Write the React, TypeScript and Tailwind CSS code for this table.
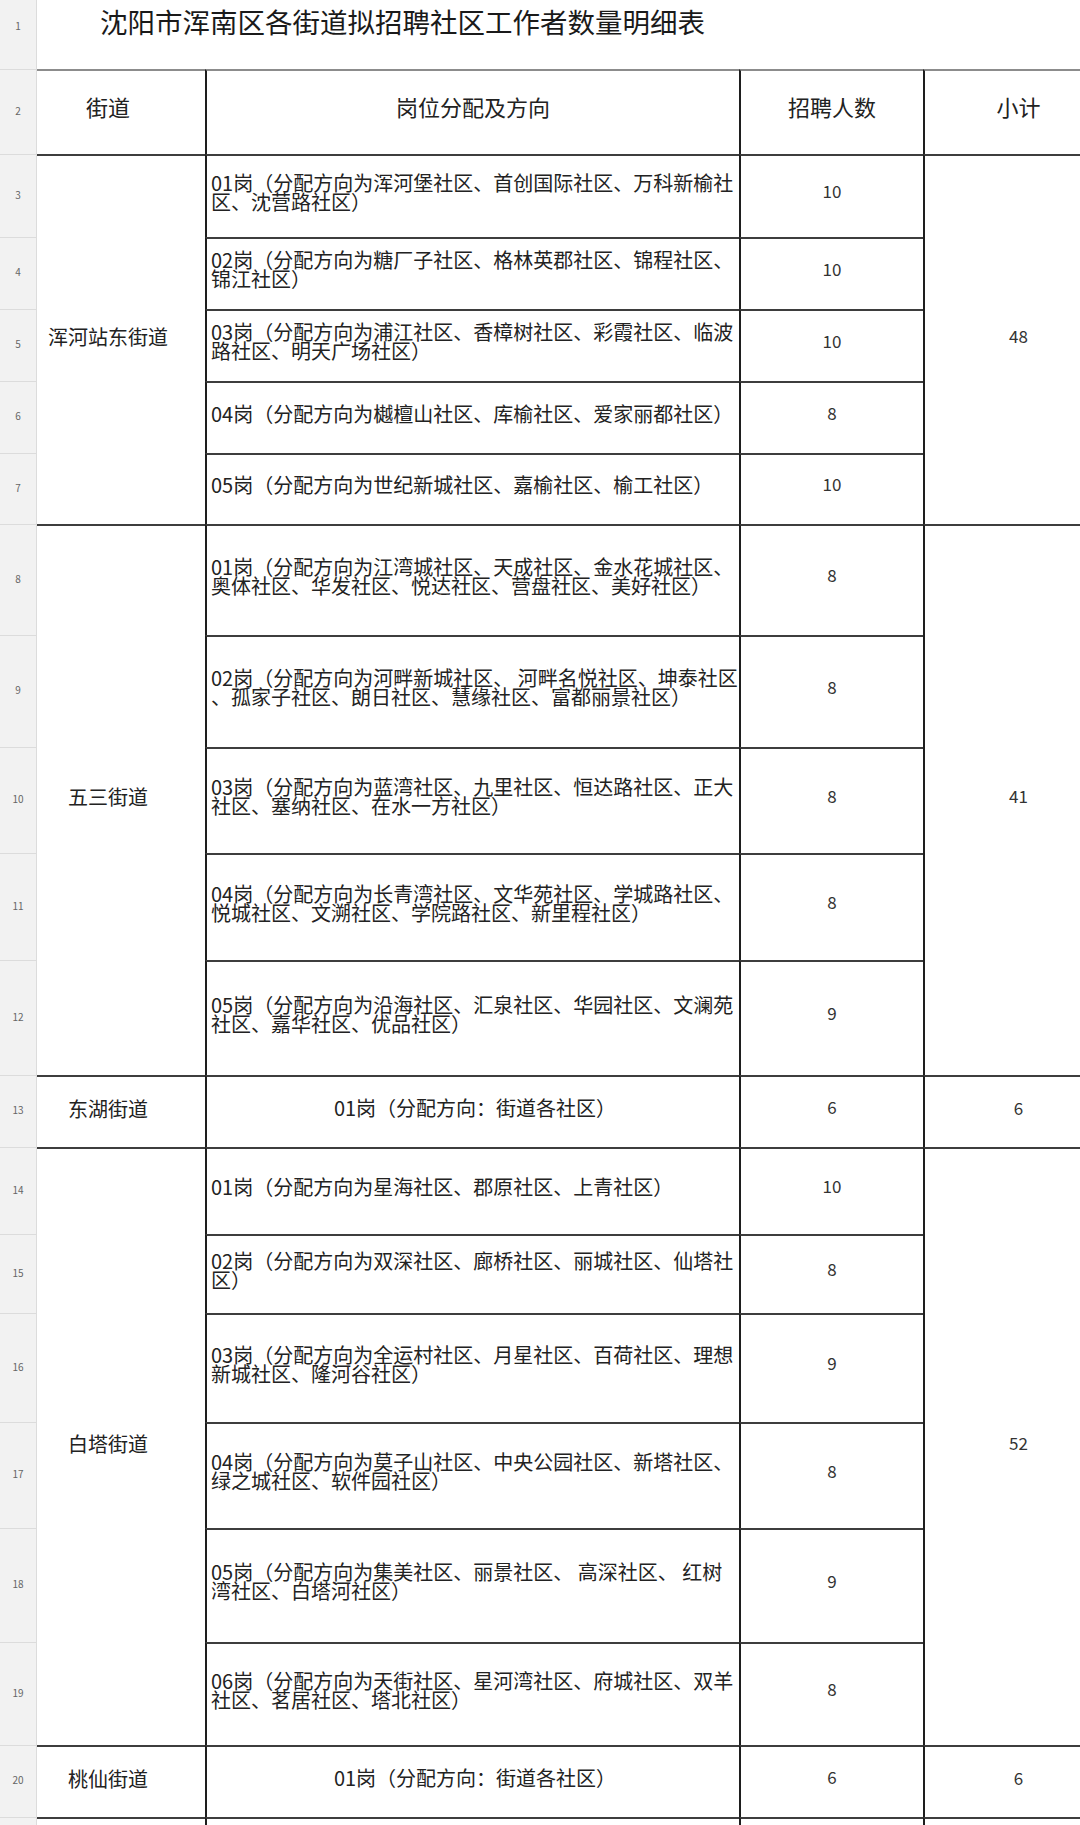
import React from 'react'

type Post = { lines: string[]; count: number }
type Block = { street: string; span: string; subtotal: number; posts: Post[]; center?: boolean }

const blocks: Block[] = [
  {
    street: '浑河站东街道',
    span: 'row-span-5',
    subtotal: 48,
    posts: [
      { lines: ['01岗（分配方向为浑河堡社区、首创国际社区、万科新榆社', '区、沈营路社区）'], count: 10 },
      { lines: ['02岗（分配方向为糖厂子社区、格林英郡社区、锦程社区、', '锦江社区）'], count: 10 },
      { lines: ['03岗（分配方向为浦江社区、香樟树社区、彩霞社区、临波', '路社区、明天广场社区）'], count: 10 },
      { lines: ['04岗（分配方向为樾檀山社区、库榆社区、爱家丽都社区）'], count: 8 },
      { lines: ['05岗（分配方向为世纪新城社区、嘉榆社区、榆工社区）'], count: 10 },
    ],
  },
  {
    street: '五三街道',
    span: 'row-span-5',
    subtotal: 41,
    posts: [
      { lines: ['01岗（分配方向为江湾城社区、天成社区、金水花城社区、', '奥体社区、华发社区、悦达社区、营盘社区、美好社区）'], count: 8 },
      { lines: ['02岗（分配方向为河畔新城社区、 河畔名悦社区、坤泰社区', '、孤家子社区、朗日社区、慧缘社区、富都丽景社区）'], count: 8 },
      { lines: ['03岗（分配方向为蓝湾社区、九里社区、恒达路社区、正大', '社区、塞纳社区、在水一方社区）'], count: 8 },
      { lines: ['04岗（分配方向为长青湾社区、文华苑社区、学城路社区、', '悦城社区、文溯社区、学院路社区、新里程社区）'], count: 8 },
      { lines: ['05岗（分配方向为沿海社区、汇泉社区、华园社区、文澜苑', '社区、嘉华社区、优品社区）'], count: 9 },
    ],
  },
  {
    street: '东湖街道',
    span: 'row-span-1',
    subtotal: 6,
    center: true,
    posts: [{ lines: ['01岗（分配方向：街道各社区）'], count: 6 }],
  },
  {
    street: '白塔街道',
    span: 'row-span-6',
    subtotal: 52,
    posts: [
      { lines: ['01岗（分配方向为星海社区、郡原社区、上青社区）'], count: 10 },
      { lines: ['02岗（分配方向为双深社区、廊桥社区、丽城社区、仙塔社', '区）'], count: 8 },
      { lines: ['03岗（分配方向为全运村社区、月星社区、百荷社区、理想', '新城社区、隆河谷社区）'], count: 9 },
      { lines: ['04岗（分配方向为莫子山社区、中央公园社区、新塔社区、', '绿之城社区、软件园社区）'], count: 8 },
      { lines: ['05岗（分配方向为集美社区、丽景社区、 高深社区、 红树', '湾社区、白塔河社区）'], count: 9 },
      { lines: ['06岗（分配方向为天街社区、星河湾社区、府城社区、双羊', '社区、茗居社区、塔北社区）'], count: 8 },
    ],
  },
  {
    street: '桃仙街道',
    span: 'row-span-1',
    subtotal: 6,
    center: true,
    posts: [{ lines: ['01岗（分配方向：街道各社区）'], count: 6 }],
  },
]

const rowNum =
  'col-start-1 flex items-center justify-center border-t border-r border-[#dcdcdc] bg-[#f2f2f2] pb-[4px] text-[10px] text-[#666]'
const top = 'border-t-2 border-t-[#3d3d3d]'
const left = 'border-l-2 border-l-[#1e1e1e]'
const headTop = 'border-t-2 border-t-[#8c8c8c]'

function RowNum({ n }: { n: number }) {
  return <div className={rowNum}>{n}</div>
}

export default function App() {
  let n = 3
  const cells: React.ReactNode[] = []

  blocks.forEach((b, bi) => {
    b.posts.forEach((p, pi) => {
      const rn = n++
      cells.push(<RowNum key={`n${rn}`} n={rn} />)
      if (pi === 0) {
        cells.push(
          <div
            key={`s${bi}`}
            className={`col-start-2 ${b.span} flex items-center justify-center pr-[26px] pb-[7px] text-[20px] text-[#222] ${top}`}
          >
            {b.street}
          </div>,
        )
      }
      cells.push(
        <div
          key={`p${rn}`}
          className={`col-start-3 flex flex-col ${b.center ? 'items-center' : 'items-start'} justify-center pl-[4px] pb-[10px] text-[20px] leading-[19px] whitespace-nowrap text-[#222] ${top} ${left}`}
        >
          {p.lines.map((l, i) => (
            <span key={i}>{l}</span>
          ))}
        </div>,
      )
      cells.push(
        <div
          key={`c${rn}`}
          className={`col-start-4 flex items-center justify-center pb-[11px] text-[17px] text-[#333] ${top} ${left}`}
        >
          {p.count}
        </div>,
      )
      if (pi === 0) {
        cells.push(
          <div
            key={`t${bi}`}
            className={`col-start-5 ${b.span} flex items-center justify-center pl-[32px] pb-[9px] text-[17px] text-[#333] ${top} ${left}`}
          >
            {b.subtotal}
          </div>,
        )
      }
    })
  })

  return (
    <div className="grid h-[1825px] w-[1080px] grid-cols-[37px_168px_534px_184px_157px] grid-rows-[69px_85px_83px_72px_72px_72px_71px_111px_112px_106px_107px_115px_72px_87px_79px_109px_106px_114px_103px_72px_8px] overflow-hidden bg-white font-['Noto_Sans_CJK_SC','Noto_Sans',sans-serif]">
      {/* 标题行 */}
      <div className="col-start-1 flex items-center justify-center border-r border-[#dcdcdc] bg-[#f2f2f2] pb-[18px] text-[10px] text-[#666]">
        1
      </div>
      <div className="col-span-4 col-start-2 flex items-center pb-[25px] pl-[63px] text-[27.5px] text-[#1a1a1a]">
        沈阳市浑南区各街道拟招聘社区工作者数量明细表
      </div>

      {/* 表头 */}
      <RowNum n={2} />
      <div className={`col-start-2 flex items-center justify-center pr-[26px] pb-[12px] text-[22px] text-[#222] ${headTop}`}>
        街道
      </div>
      <div className={`col-start-3 flex items-center justify-center pb-[12px] text-[22px] text-[#222] ${headTop} ${left}`}>
        岗位分配及方向
      </div>
      <div className={`col-start-4 flex items-center justify-center pb-[12px] text-[22px] text-[#222] ${headTop} ${left}`}>
        招聘人数
      </div>
      <div className={`col-start-5 flex items-center justify-center pl-[32px] pb-[12px] text-[22px] text-[#222] ${headTop} ${left}`}>
        小计
      </div>

      {cells}

      {/* 截断的下一行 */}
      <div className={rowNum} />
      <div className={`col-start-2 ${top}`} />
      <div className={`col-start-3 ${top} ${left}`} />
      <div className={`col-start-4 ${top} ${left}`} />
      <div className={`col-start-5 ${top} ${left}`} />
    </div>
  )
}
